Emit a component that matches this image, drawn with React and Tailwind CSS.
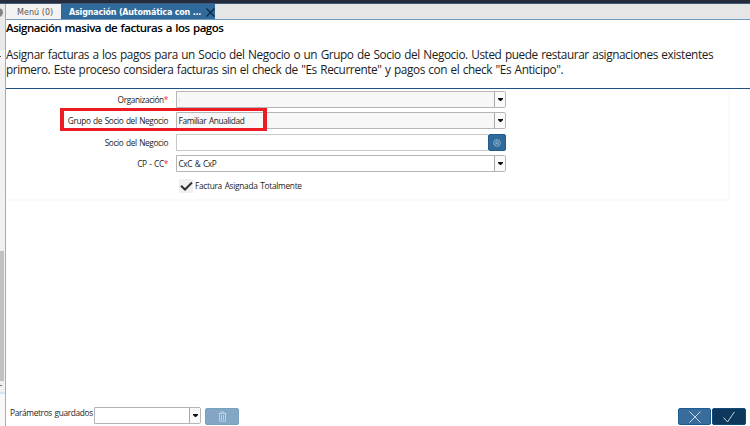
import React from "react";

function Arrow() {
  return (
    <svg className="block" width="5" height="3" viewBox="0 0 5 3">
      <path d="M0 0h5v1L3 3H2L0 1z" fill="#111" />
    </svg>
  );
}

function Select({ value, fill, width }) {
  return (
    <div className={`flex h-[17px] shrink-0 rounded-r-[2px] border border-[#b5b5b5] ${width} ${fill}`}>
      <div className="flex flex-1 items-center pl-[1.5px] whitespace-nowrap">{value}</div>
      <div className="flex w-[11px] items-center justify-center rounded-r-[1px] border-l border-[#a8a8a8] bg-[#fafafa]">
        <Arrow />
      </div>
    </div>
  );
}

function Label({ children, required }) {
  return (
    <div className="w-[162px] shrink-0 text-right leading-[17px] whitespace-nowrap">
      {children}
      {required && <span className="text-[#ff2020]">*</span>}
    </div>
  );
}

function Sidebar() {
  return (
    <aside className="flex w-[6px] shrink-0 flex-col overflow-hidden border-r border-[#ababab] bg-[#f1f1f1]">
      <div className="flex h-[46px] shrink-0 bg-[#e9e9e9] pt-[4px]">
        <div className="-ml-[6px] h-[9px] w-[9px] rounded-full bg-[#858585]" />
      </div>
      <div className="h-[12px] shrink-0 bg-[#f4f4f4] pt-[6px]">
        <div className="h-px w-px bg-[#555]" />
      </div>
      <div className="h-[189px] shrink-0" />
      <div className="h-[130px] w-[4px] shrink-0 bg-[#c1c1c1]" />
      <div className="h-[11px] shrink-0 pt-[4px]">
        <div className="h-px w-[2px] bg-[#777]" />
      </div>
      <div className="h-[2px] shrink-0 bg-[#d3e5f2]" />
      <div className="flex-1 bg-[#f8f8f8]" />
    </aside>
  );
}

function Tabs() {
  return (
    <div className="flex h-[16px] shrink-0 border-b border-[#6f99bd] bg-[#e6e6e6] font-['DejaVu_Sans',sans-serif] [word-spacing:0px]">
      <div className="flex w-[55px] items-center bg-[#f3f3f3] pt-[2px] pl-[11px] text-[8px] whitespace-nowrap text-[#555]">
        <span className="tracking-[0.05px]">Menú (0)</span>
      </div>
      <div className="flex w-[154px] items-center bg-[#2f6a9b] pt-[2px] pl-[8px] text-[8px] font-bold whitespace-nowrap text-white">
        <span className="w-[137px] tracking-[-0.19px]">Asignación (Automática con ...</span>
        <svg width="9" height="9" viewBox="0 0 9 9" className="shrink-0">
          <path d="M.5.5l8 8M8.500.5l-8 8" stroke="#0f2537" strokeWidth="1.100" />
        </svg>
      </div>
    </div>
  );
}

export default function App() {
  return (
    <div className="flex h-[426px] w-[750px] flex-col overflow-hidden bg-white font-['Open_Sans','Noto_Sans',sans-serif] text-[8.3px] leading-[12px] tracking-[-0.38px] [word-spacing:0.8px] text-[#222]">
      <div className="h-[4px] shrink-0 border-b border-[#3d5c78] bg-[#262b3e]" />
      <div className="flex min-h-0 flex-1">
        <Sidebar />
        <main className="flex min-w-0 flex-1 flex-col">
          <Tabs />
          <header className="h-[69px] shrink-0 border-b border-[#1f5280] whitespace-nowrap text-[#1c1c1c]">
            <h1 className="h-[26px] pt-px text-[11.5px] leading-[14px] font-semibold tracking-[-0.47px] text-black">
              Asignación masiva de facturas a los pagos
            </h1>
            <p className="pt-[0.5px] text-[11.8px] leading-[15.5px] tracking-[-0.41px]">
              Asignar facturas a los pagos para un Socio del Negocio o un Grupo de Socio del Negocio. Usted puede restaurar asignaciones existentes
              <br />
              primero. Este proceso considera facturas sin el check de "Es Recurrente" y pagos con el check "Es Anticipo".
            </p>
          </header>
          <section className="relative h-[112px] w-[724px] shrink-0 border-r-2 border-b-2 border-[#fafafa]">
            <div className="flex h-[21px] gap-2 pt-[2px]">
              <Label required>Organización</Label>
              <Select width="w-[330px]" fill="bg-[#f7f7f7]" value={<span className="h-[5px] w-px bg-[#fbe3b4]" />} />
            </div>
            <div className="flex h-[22px] gap-2 pt-[2px]">
              <Label>Grupo de Socio del Negocio</Label>
              <Select width="w-[330px]" fill="bg-[#f7f7f7]" value="Familiar Anualidad" />
            </div>
            <div className="flex h-[21px] gap-2 pt-[2px]">
              <Label>Socio del Negocio</Label>
              <div className="flex">
                <div className="h-[17px] w-[312px] border border-r-0 border-[#c8c8c8] bg-white" />
                <div className="flex h-[17px] w-[18px] items-center justify-center rounded-[2px] border border-[#245b89] bg-[#2f6a9b]">
                  <svg width="8" height="8" viewBox="0 0 8 8" fill="none" stroke="#a9c5dc" strokeWidth=".7">
                    <circle cx="4" cy="4" r="3.400" />
                    <path d="M2.900 6V3Q2.900 1.900 4 1.900T5.100 3V6M2.900 4.300H5.100" />
                  </svg>
                </div>
              </div>
            </div>
            <div className="flex h-[22px] gap-2 pt-[2px]">
              <Label required>CP - CC</Label>
              <Select width="w-[330px]" fill="bg-white" value="CxC & CxP" />
            </div>
            <div className="flex h-[22px] items-center pl-[173px]">
              <div className="flex h-[14px] w-[14px] items-center justify-center bg-[#f0f0f0]">
                <svg width="13" height="10" viewBox="0 0 13 10">
                  <path d="M1 4.800L5 8.500L12 1.500" fill="none" stroke="#303030" strokeWidth="2" />
                </svg>
              </div>
              <span className="pl-[2px] tracking-[-0.28px] whitespace-nowrap">Factura Asignada Totalmente</span>
            </div>
            <div className="absolute top-[19px] left-[54px] h-[23px] w-[207px] border-x-4 border-y-[3.5px] border-[#ed1c24]" />
          </section>
          <div className="flex-1" />
          <footer className="flex h-[19px] shrink-0">
            <span className="w-[88px] pl-[4px] tracking-[-0.33px] whitespace-nowrap">Parámetros guardados</span>
            <Select width="w-[107px]" fill="bg-white" value="" />
            <div className="mt-px ml-[4px] flex h-[17px] w-[34px] items-center justify-center rounded-[2px] border border-[#78a0c0] bg-[#82a6c4]">
              <svg width="9" height="11" viewBox="0 0 9 11" fill="none" stroke="#bdd1e1" strokeWidth="1">
                <path d="M.5 2.500h8M3 2.500V.8h3v1.700M1.500 2.500v7.700h6V2.500M3.500 4v5M5.500 4v5" />
              </svg>
            </div>
            <div className="mt-px ml-auto flex gap-px pr-[4px]">
              <div className="flex h-[17px] w-[33px] items-center justify-center rounded-[2px] border border-[#1c5c93] bg-[#3a6c9b]">
                <svg width="12" height="12" viewBox="0 0 12 12">
                  <path d="M.5.5l11 11M11.500.5l-11 11" stroke="#d9e4ee" strokeWidth=".9" />
                </svg>
              </div>
              <div className="flex h-[17px] w-[34px] items-center justify-center rounded-[2px] border border-[#124a7a] bg-[#0d375b]">
                <svg width="12" height="12" viewBox="0 0 12 12">
                  <path d="M.5 6.500L4.500 11L11.500.8" fill="none" stroke="#d9e4ee" strokeWidth=".9" />
                </svg>
              </div>
            </div>
          </footer>
        </main>
      </div>
    </div>
  );
}
